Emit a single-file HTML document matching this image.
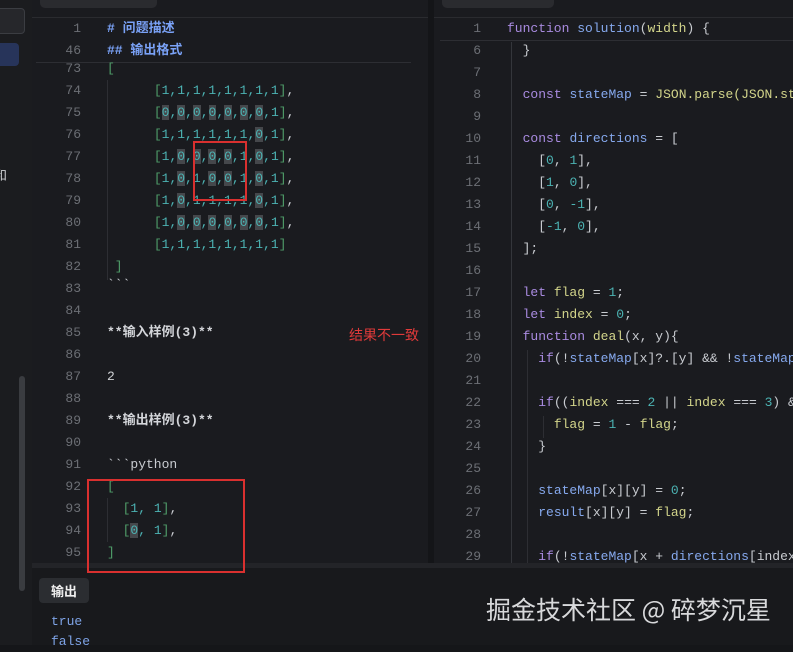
<!DOCTYPE html>
<html><head><meta charset="utf-8">
<style>
*{margin:0;padding:0;box-sizing:border-box}
body{width:793px;height:645px;overflow:hidden;background:#151619;position:relative;font-family:"Liberation Mono","Noto Sans CJK SC",monospace;font-size:13px}
.abs{position:absolute}
.ln{position:absolute;height:22px;line-height:22px;white-space:pre}
.num{color:#6c6f75;text-align:right;width:40px}
.g{color:#4f9d69}.c{color:#4cb3b3}.k{color:#a98be0}.b{color:#86a9ee}.y{color:#d3d58b}.w{color:#cfd1d4}.p{color:#c9ccd1}
.h{color:#7aa2f7;font-weight:bold}
.hl{background:#45474b}
.bd{color:#d4d6da;font-weight:bold}
</style></head><body>
<div class="abs" style="left:0;top:0;width:32px;height:645px;background:#1b1c1f"></div>
<div class="abs" style="left:-4px;top:8px;width:29px;height:26px;border:1px solid #3b3d42;border-radius:4px;background:#26272b"></div>
<div class="abs" style="left:0;top:43px;width:19px;height:23px;background:#27345a;border-radius:0 4px 4px 0"></div>
<div class="abs" style="left:-6px;top:165px;color:#cfd1d4;font-family:'Noto Sans CJK SC',sans-serif;font-size:13px">和</div>
<div class="abs" style="left:19px;top:376px;width:6px;height:215px;background:#3a3c40;border-radius:3px"></div>
<div class="abs" style="left:32px;top:0;width:396px;height:566px;background:#1a1b1f;overflow:hidden">
 <div class="abs" style="left:8px;top:-6px;width:117px;height:14px;background:#2a2b2f;border-radius:5px"></div>
 <div class="abs" style="left:0;top:17px;width:396px;height:1px;background:#2a2b2f"></div>
 <div class="abs" style="left:4px;top:62px;width:375px;height:1px;background:#2d2e33"></div>
 <div class="abs" style="left:75px;top:80px;width:1px;height:200px;background:#2d2e33"></div>
 <div class="abs" style="left:75px;top:498px;width:1px;height:44px;background:#2d2e33"></div>
</div>
<div class="abs" style="left:428px;top:0;width:6px;height:566px;background:#141518"></div>
<div class="abs" style="left:434px;top:0;width:359px;height:566px;background:#1a1b1f;overflow:hidden">
 <div class="abs" style="left:8px;top:-6px;width:112px;height:14px;background:#2a2b2f;border-radius:5px"></div>
 <div class="abs" style="left:0;top:17px;width:359px;height:1px;background:#2a2b2f"></div>
 <div class="abs" style="left:6px;top:40px;width:353px;height:1px;background:#2d2e33"></div>
 <div class="abs" style="left:77px;top:42px;width:1px;height:524px;background:#34363b"></div>
 <div class="abs" style="left:93px;top:350px;width:1px;height:216px;background:#2d2e33"></div>
 <div class="abs" style="left:109px;top:416px;width:1px;height:22px;background:#2d2e33"></div>
</div>
<div class="abs" style="left:32px;top:563px;width:761px;height:5px;background:#232428"></div>
<div class="abs" style="left:32px;top:568px;width:761px;height:77px;background:#18191c"></div>
<div class="abs" style="left:39px;top:578px;width:50px;height:25px;background:#2b2d31;border-radius:4px;color:#f0f0f0;font-family:'Noto Sans CJK SC',sans-serif;font-weight:bold;font-size:13px;line-height:25px;text-align:center">输出</div>
<div class="abs" style="left:51px;top:612px;color:#7ea3e6;line-height:20px">true<br>false</div>
<div class="abs" style="left:486px;top:591px;color:#d8d9db;font-family:'Noto Sans CJK SC',sans-serif;font-size:25px;line-height:36px;white-space:nowrap">掘金技术社区 @ 碎梦沉星</div>

<div id="L" class="abs" style="left:0;top:0;width:428px;height:563px;overflow:hidden">
<div class="ln num" style="left:41px;top:18px">1</div><div class="ln h" style="left:107px;top:18px"># 问题描述</div>
<div class="ln num" style="left:41px;top:40px">46</div><div class="ln h" style="left:107px;top:40px">## 输出格式</div>
<div class="ln num" style="left:41px;top:58px">73</div><div class="ln g" style="left:107px;top:58px">[</div>
<div class="ln num" style="left:41px;top:80px">74</div><div class="ln" style="left:107px;top:80px">      <span class="g">[</span><span class="c">1,1,1,1,1,1,1,1</span><span class="g">]</span><span class="p">,</span></div>
<div class="ln num" style="left:41px;top:102px">75</div><div class="ln c" style="left:107px;top:102px">      <span class="g">[</span><span class="hl">0</span>,<span class="hl">0</span>,<span class="hl">0</span>,<span class="hl">0</span>,<span class="hl">0</span>,<span class="hl">0</span>,<span class="hl">0</span>,1<span class="g">]</span><span class="p">,</span></div>
<div class="ln num" style="left:41px;top:124px">76</div><div class="ln c" style="left:107px;top:124px">      <span class="g">[</span>1,1,1,1,1,1,<span class="hl">0</span>,1<span class="g">]</span><span class="p">,</span></div>
<div class="ln num" style="left:41px;top:146px">77</div><div class="ln c" style="left:107px;top:146px">      <span class="g">[</span>1,<span class="hl">0</span>,<span class="hl">0</span>,<span class="hl">0</span>,<span class="hl">0</span>,1,<span class="hl">0</span>,1<span class="g">]</span><span class="p">,</span></div>
<div class="ln num" style="left:41px;top:168px">78</div><div class="ln c" style="left:107px;top:168px">      <span class="g">[</span>1,<span class="hl">0</span>,1,<span class="hl">0</span>,<span class="hl">0</span>,1,<span class="hl">0</span>,1<span class="g">]</span><span class="p">,</span></div>
<div class="ln num" style="left:41px;top:190px">79</div><div class="ln c" style="left:107px;top:190px">      <span class="g">[</span>1,<span class="hl">0</span>,1,1,1,1,<span class="hl">0</span>,1<span class="g">]</span><span class="p">,</span></div>
<div class="ln num" style="left:41px;top:212px">80</div><div class="ln c" style="left:107px;top:212px">      <span class="g">[</span>1,<span class="hl">0</span>,<span class="hl">0</span>,<span class="hl">0</span>,<span class="hl">0</span>,<span class="hl">0</span>,<span class="hl">0</span>,1<span class="g">]</span><span class="p">,</span></div>
<div class="ln num" style="left:41px;top:234px">81</div><div class="ln c" style="left:107px;top:234px">      <span class="g">[</span>1,1,1,1,1,1,1,1<span class="g">]</span></div>
<div class="ln num" style="left:41px;top:256px">82</div><div class="ln g" style="left:107px;top:256px"> ]</div>
<div class="ln num" style="left:41px;top:278px">83</div><div class="ln p" style="left:107px;top:274px">&#96;&#96;&#96;</div>
<div class="ln num" style="left:41px;top:300px">84</div>
<div class="ln num" style="left:41px;top:322px">85</div><div class="ln bd" style="left:107px;top:322px">**输入样例(3)**</div>
<div class="ln num" style="left:41px;top:344px">86</div>
<div class="ln num" style="left:41px;top:366px">87</div><div class="ln w" style="left:107px;top:366px">2</div>
<div class="ln num" style="left:41px;top:388px">88</div>
<div class="ln num" style="left:41px;top:410px">89</div><div class="ln bd" style="left:107px;top:410px">**输出样例(3)**</div>
<div class="ln num" style="left:41px;top:432px">90</div>
<div class="ln num" style="left:41px;top:454px">91</div><div class="ln p" style="left:107px;top:454px">&#96;&#96;&#96;python</div>
<div class="ln num" style="left:41px;top:476px">92</div><div class="ln g" style="left:107px;top:476px">[</div>
<div class="ln num" style="left:41px;top:498px">93</div><div class="ln" style="left:107px;top:498px">  <span class="g">[</span><span class="c">1, 1</span><span class="g">]</span><span class="p">,</span></div>
<div class="ln num" style="left:41px;top:520px">94</div><div class="ln" style="left:107px;top:520px">  <span class="g">[</span><span class="c hl">0</span><span class="c">, 1</span><span class="g">]</span><span class="p">,</span></div>
<div class="ln num" style="left:41px;top:542px">95</div><div class="ln g" style="left:107px;top:542px">]</div>
</div>
<div class="abs" style="left:349px;top:324px;color:#e03a3a;font-family:'Noto Sans CJK SC',sans-serif;font-size:14px;line-height:22px">结果不一致</div>
<div class="abs" style="left:193px;top:141px;width:54px;height:60px;border:2px solid #d9302f"></div>
<div class="abs" style="left:87px;top:479px;width:158px;height:94px;border:2px solid #d9302f"></div>

<div id="R" class="abs" style="left:434px;top:0;width:359px;height:563px;overflow:hidden">
<div class="ln num" style="left:7px;top:18px">1</div><div class="ln" style="left:73px;top:18px"><span class="k">function</span> <span class="b">solution</span><span class="p">(</span><span class="y">width</span><span class="p">) {</span></div>
<div class="ln num" style="left:7px;top:40px">6</div><div class="ln p" style="left:73px;top:40px">  }</div>
<div class="ln num" style="left:7px;top:62px">7</div>
<div class="ln num" style="left:7px;top:84px">8</div><div class="ln" style="left:73px;top:84px">  <span class="k">const</span> <span class="b">stateMap</span> <span class="p">=</span> <span class="y">JSON.parse(JSON.stringify</span></div>
<div class="ln num" style="left:7px;top:106px">9</div>
<div class="ln num" style="left:7px;top:128px">10</div><div class="ln" style="left:73px;top:128px">  <span class="k">const</span> <span class="b">directions</span> <span class="p">= [</span></div>
<div class="ln num" style="left:7px;top:150px">11</div><div class="ln p" style="left:73px;top:150px">    [<span class="c">0</span>, <span class="c">1</span>],</div>
<div class="ln num" style="left:7px;top:172px">12</div><div class="ln p" style="left:73px;top:172px">    [<span class="c">1</span>, <span class="c">0</span>],</div>
<div class="ln num" style="left:7px;top:194px">13</div><div class="ln p" style="left:73px;top:194px">    [<span class="c">0</span>, <span class="c">-1</span>],</div>
<div class="ln num" style="left:7px;top:216px">14</div><div class="ln p" style="left:73px;top:216px">    [<span class="c">-1</span>, <span class="c">0</span>],</div>
<div class="ln num" style="left:7px;top:238px">15</div><div class="ln p" style="left:73px;top:238px">  ];</div>
<div class="ln num" style="left:7px;top:260px">16</div>
<div class="ln num" style="left:7px;top:282px">17</div><div class="ln" style="left:73px;top:282px">  <span class="k">let</span> <span class="y">flag</span> <span class="p">=</span> <span class="c">1</span><span class="p">;</span></div>
<div class="ln num" style="left:7px;top:304px">18</div><div class="ln" style="left:73px;top:304px">  <span class="k">let</span> <span class="y">index</span> <span class="p">=</span> <span class="c">0</span><span class="p">;</span></div>
<div class="ln num" style="left:7px;top:326px">19</div><div class="ln" style="left:73px;top:326px">  <span class="k">function</span> <span class="y">deal</span><span class="p">(x, y){</span></div>
<div class="ln num" style="left:7px;top:348px">20</div><div class="ln" style="left:73px;top:348px">    <span class="k">if</span><span class="p">(!</span><span class="b">stateMap</span><span class="p">[x]?.[y] &amp;&amp; !</span><span class="b">stateMap</span></div>
<div class="ln num" style="left:7px;top:370px">21</div>
<div class="ln num" style="left:7px;top:392px">22</div><div class="ln" style="left:73px;top:392px">    <span class="k">if</span><span class="p">((</span><span class="y">index</span> <span class="p">===</span> <span class="c">2</span> <span class="p">||</span> <span class="y">index</span> <span class="p">===</span> <span class="c">3</span><span class="p">) &amp;&amp;</span></div>
<div class="ln num" style="left:7px;top:414px">23</div><div class="ln" style="left:73px;top:414px">      <span class="y">flag</span> <span class="p">=</span> <span class="c">1</span> <span class="p">-</span> <span class="y">flag</span><span class="p">;</span></div>
<div class="ln num" style="left:7px;top:436px">24</div><div class="ln p" style="left:73px;top:436px">    }</div>
<div class="ln num" style="left:7px;top:458px">25</div>
<div class="ln num" style="left:7px;top:480px">26</div><div class="ln" style="left:73px;top:480px">    <span class="b">stateMap</span><span class="p">[x][y] =</span> <span class="c">0</span><span class="p">;</span></div>
<div class="ln num" style="left:7px;top:502px">27</div><div class="ln" style="left:73px;top:502px">    <span class="b">result</span><span class="p">[x][y] =</span> <span class="y">flag</span><span class="p">;</span></div>
<div class="ln num" style="left:7px;top:524px">28</div>
<div class="ln num" style="left:7px;top:546px">29</div><div class="ln" style="left:73px;top:546px">    <span class="k">if</span><span class="p">(!</span><span class="b">stateMap</span><span class="p">[x +</span> <span class="b">directions</span><span class="p">[index</span></div>
</div>
</body></html>
